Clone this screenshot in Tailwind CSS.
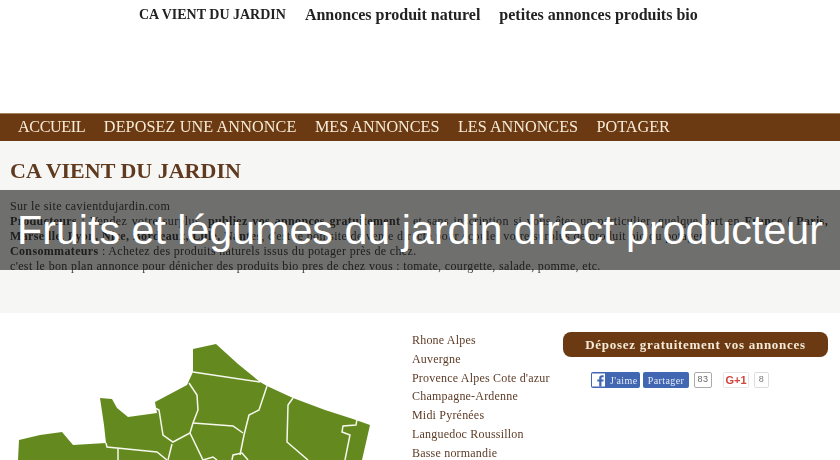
<!DOCTYPE html>
<html lang="fr">
<head>
    <meta charset="UTF-8">
    <title>Fruits et légumes du jardin direct producteur</title>
    <script src="https://cdn.jsdelivr.net/npm/@tailwindcss/browser@4"></script>
</head>
<body class="relative w-[840px] h-[460px] overflow-hidden bg-white font-['Liberation_Serif',serif]">

    <div class="blur-[0.4px]">
        <div class="h-[29px] pl-[139px] flex items-center gap-[19px] text-[16px] leading-[18px] font-bold text-[#222]">
            <a class="text-[14px]">CA VIENT DU JARDIN</a>
            <a>Annonces produit naturel</a>
            <a>petites annonces produits bio</a>
        </div>
        <div class="h-[84px]"></div>

        <nav class="h-[28px] bg-[#6b3a12] border-t border-[#a58560] flex items-center gap-[18.500px] pl-[18px] text-[16.2px] text-[#f8ecd8] uppercase">
            <a class="tracking-[-0.4px]">Accueil</a>
            <a class="tracking-[0.1px]">Deposez une annonce</a>
            <a>Mes annonces</a>
            <a>Les annonces</a>
            <a>Potager</a>
        </nav>

        <section class="h-[172px] bg-[#f6f6f4] pl-[10px] pt-[16px]">
            <h1 class="text-[22px] leading-[28px] font-bold text-[#5f3a1e]">CA VIENT DU JARDIN</h1>
            <div class="mt-[14px] text-[12px] leading-[15px] tracking-[0.35px] text-[#444] whitespace-nowrap">
                <p>Sur le site cavientdujardin.com</p>
                <p class="w-[818px] text-justify [text-align-last:justify] whitespace-normal"><b>Producteurs</b> : Vendez votre surplus, <b>publiez vos annonces gratuitement</b> , et sans inscription si vous êtes un particulier, quelque part en <b>France</b> ( <b>Paris,</b></p>
                <p><b>Marseille, Lyon, Nice, Bordeaux, Lille, Nantes</b>, c'est le bon site de vente directe pour écouler votre surplus de produit bio du potager</p>
                <p><b>Consommateurs</b> : Achetez des produits naturels issus du potager près de chez.</p>
                <p>c'est le bon plan annonce pour dénicher des produits bio pres de chez vous : tomate, courgette, salade, pomme, etc.</p>
            </div>
        </section>

        <div class="flex h-[147px]">
            <svg class="w-[412px] h-[147px] shrink-0" viewBox="0 313 412 147">
                <path fill="#648a1f" stroke="none" d="M193 349 L216 344 L238 364 L260 382 L267 386 L293 398 L325 410 L353 419 L370 425 L362 460 L18 460 L19 440 L40 435 L62 432 L73 445 L106 443 L104 425 L100 398 L112 399 L117 408 L128 417 L157 413 L155 402 L187 385 L193 372 Z"/>
                <g fill="none" stroke="#f6f8ee" stroke-width="1.5">
                    <path d="M193 372 L260 382 M267 386 L259 410 L249 415 L244 435 L240 455"/>
                    <path d="M189 383 L197 395 L198 410 L193 423 L190 433 L173 442 L163 435 L159 410 L155 408"/>
                    <path d="M193 423 L233 426 L243 433"/>
                    <path d="M190 433 L203 460 L213 457 L217 460 M172 444 L168 460"/>
                    <path d="M293 398 L288 405 L287 442 L308 460"/>
                    <path d="M357 419 L356 425 L343 426 L342 432 L350 435 L345 460"/>
                    <path d="M106 443 L107 447 L157 452 L167 460 M118 448 L118 460"/>
                    <path d="M232 460 L233 455 L242 453 L248 460"/>
                </g>
            </svg>

            <ul class="w-[151px] shrink-0 pt-[18px] text-[12px] leading-[18.8px] tracking-[0.2px] text-[#5d3c28] whitespace-nowrap">
                <li>Rhone Alpes</li>
                <li>Auvergne</li>
                <li>Provence Alpes Cote d'azur</li>
                <li>Champagne-Ardenne</li>
                <li>Midi Pyrénées</li>
                <li>Languedoc Roussillon</li>
                <li>Basse normandie</li>
            </ul>

            <div class="pt-[19px]">
                <a class="w-[265px] h-[25px] rounded-[8px] bg-[#6b3a12] flex items-center justify-center text-[13px] font-bold tracking-[0.72px] text-[#f5ead8]">Déposez gratuitement vos annonces</a>
                <div class="mt-[15px] ml-[28px] h-[16px] flex items-stretch text-[10px] tracking-[0.4px]">
                    <span class="w-[49px] bg-[#4267b2] rounded-[2px] flex items-center text-[#e6ebf5] overflow-hidden">
                        <svg class="w-[16px] h-[16px] shrink-0 mr-[3px]" viewBox="0 0 16 16"><rect x="1" y="1.500" width="13" height="13" fill="#fff"/><path fill="#4267b2" d="M10.500 14.500 V9.600 h1.900 l.3-2.100 h-2.200 V6.200 c0-.7.3-1 1-1 h1.200 V3.300 C12.200 3.200 11.600 3.200 11 3.200 c-1.800 0-2.800 1-2.800 2.800 v1.500 H6.300 v2.100 h1.900 v4.900 Z"/></svg>
                        J'aime
                    </span>
                    <span class="ml-[3px] w-[46px] bg-[#4267b2] rounded-[2px] flex items-center justify-center text-[#e6ebf5]">Partager</span>
                    <span class="ml-[5px] w-[18px] bg-white border border-[#aaa] rounded-[2px] flex items-center justify-center text-[9px] text-[#666] font-['Liberation_Sans',sans-serif]">83</span>
                    <span class="ml-[11px] w-[26px] bg-white border border-[#e6e6e6] rounded-[2px] flex items-center justify-center text-[11px] font-bold text-[#d0453a] tracking-normal font-['Liberation_Sans',sans-serif]">G+1</span>
                    <span class="ml-[5px] w-[15px] bg-white border border-[#ddd] rounded-[2px] flex items-center justify-center text-[9px] text-[#777] font-['Liberation_Sans',sans-serif]">8</span>
                </div>
            </div>
        </div>
    </div>

    <div class="absolute left-0 top-[190px] w-full h-[80px] bg-black/55 flex items-center justify-center">
        <p class="text-[41.2px] leading-[44px] text-white whitespace-nowrap font-['Liberation_Sans',sans-serif]">Fruits et légumes du jardin direct producteur</p>
    </div>

</body>
</html>
